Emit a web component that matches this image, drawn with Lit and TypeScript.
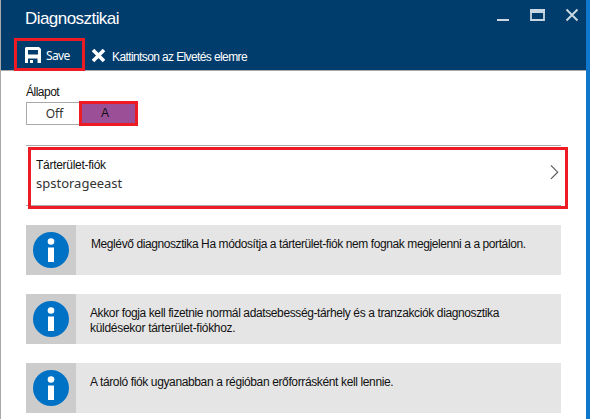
import { LitElement, html, css } from "lit";
import { customElement } from "lit/decorators.js";

@customElement("info-note")
class InfoNote extends LitElement {
  static styles = css`
    :host { display: flex; height: 50px; background: #e5e5e5; color: #111; font: 12px/15px "Liberation Sans", Arial, sans-serif; }
    .badge { flex: none; width: 50px; height: 50px; background: #ccc; }
    .badge svg { display: block; }
    .text { padding: 12px 0 0 14px; white-space: nowrap; }
  `;
  render() {
    return html`<div class="badge">
        <svg width="50" height="50" viewBox="0 0 50 50">
          <circle cx="25" cy="25" r="18" fill="#0072c6" />
          <circle cx="25" cy="16.5" r="3.3" fill="#fff" />
          <rect x="22" y="22.5" width="6" height="14.5" fill="#fff" />
        </svg>
      </div>
      <div class="text"><slot></slot></div>`;
  }
}

@customElement("app-root")
class AppRoot extends LitElement {
  static styles = css`
    :host { display: block; height: 419px; font-family: "Liberation Sans", Arial, sans-serif; font-size: 12px; color: #111; }
    * { box-sizing: border-box; }
    .blade { height: 419px; overflow: hidden; background: #fff; border-left: 1px solid #a9a9a9; border-right: 4px solid #1078cc; white-space: nowrap; }
    header { height: 71px; margin-left: -1px; background: #003c6c; border-bottom: 1px solid #aaa; border-left: 1px solid #1c5078; color: #fff; }
    .top { display: flex; height: 38px; justify-content: space-between; padding-left: 24px; }
    .title { font-size: 17px; line-height: 20px; padding-top: 9px; letter-spacing: -0.55px; }
    .win { flex: none; display: block; }
    .bar { display: flex; height: 33px; padding-left: 13px; }
    .save { display: flex; width: 71px; height: 33px; border: 3px solid #ed1c24; padding: 6px 0 0 8px; }
    .save span { font: 12px/16px "Noto Sans", "Open Sans", sans-serif; letter-spacing: -0.6px; margin: 1px 0 0 5px; }
    .discard { display: flex; padding: 10px 0 0 6px; }
    .discard span { line-height: 16px; margin: 1px 0 0 6px; letter-spacing: -0.61px; }
    svg { flex: none; display: block; }
    main { padding: 14px 25px 0 25px; }
    .label { line-height: 14px; height: 16px; letter-spacing: -0.5px; }
    .toggle { display: flex; align-items: center; height: 25px; }
    .off { width: 53px; height: 23px; border: 1px solid #aaa; border-right: 0; text-align: center; padding-left: 3px; color: #333; font: 12px/21px "Noto Sans", sans-serif; }
    .on { width: 59px; height: 25px; border: 3px solid #ed1c24; background: #9b4f96; padding-left: 19px; line-height: 18px; }
    .picker { height: 61px; margin-top: 19px; border: solid #aaa; border-width: 1px 0; }
    .mark { position: relative; width: 540px; height: 62px; margin: 1px 0 0 2px; border: 3px solid #ed1c24; display: flex; justify-content: space-between; padding: 8px 6px 0 5px; }
    .chevron { margin-top: 7px; }
    .name { line-height: 14px; letter-spacing: -0.28px; }
    .value { font: 13px/18px "Noto Sans", sans-serif; color: #333; margin-top: 2px; }
    .notes { display: flex; flex-direction: column; gap: 19px; margin-top: 19px; }
    .n1 { letter-spacing: -0.41px; text-indent: 1px; }
    .n2 { letter-spacing: -0.385px; }
    .n2 span { letter-spacing: -0.29px; }
    .n3 { letter-spacing: -0.37px; }
  `;
  render() {
    return html`<div class="blade">
      <header>
        <div class="top">
          <div class="title">Diagnosztikai</div>
          <svg class="win" width="96" height="30" viewBox="490 0 96 30" stroke="#c8d7e2" fill="none">
            <path d="M497 20h12" stroke-width="2" />
            <path d="M531 9.5v10.5h13v-10.5" stroke-width="1.8" />
            <path d="M530 11h15" stroke-width="4" />
            <path d="M566.5 9.5l11 11M577.5 9.5l-11 11" stroke-width="2" />
          </svg>
        </div>
        <div class="bar">
          <div class="save">
            <svg width="16" height="17" viewBox="0 0 16 17">
              <path fill="#fff" fill-rule="evenodd" d="M0 1l1-1h13l2 2v14H0zM3 3v4.500h10V3zM3 11.500V16h2v-3h3v3h4.500v-4.500z" />
            </svg>
            <span>Save</span>
          </div>
          <div class="discard">
            <svg width="15" height="15" viewBox="0 0 15 15"><path d="M2 2l11 11M13 2L2 13" stroke="#fff" stroke-width="3.6" /></svg>
            <span>Kattintson az Elvetés elemre</span>
          </div>
        </div>
      </header>
      <main>
        <div class="label">Állapot</div>
        <div class="toggle"><div class="off">Off</div><div class="on">A</div></div>
        <div class="picker">
          <div class="mark">
            <div><div class="name">Tárterület-fiók</div><div class="value">spstorageeast</div></div>
            <svg class="chevron" width="9" height="16" viewBox="0 0 9 16"><path d="M1 1l7 7-7 7" transform="translate(0 -.5) scale(.96)" fill="none" stroke="#555" stroke-width="1.2" /></svg>
          </div>
        </div>
        <div class="notes">
          <info-note class="n1">Meglévő diagnosztika Ha módosítja a tárterület-fiók nem fognak megjelenni a a portálon.</info-note>
          <info-note class="n2">Akkor fogja kell fizetnie normál adatsebesség-tárhely és a tranzakciók diagnosztika<br /><span>küldésekor tárterület-fiókhoz.</span></info-note>
          <info-note class="n3">A tároló fiók ugyanabban a régióban erőforrásként kell lennie.</info-note>
        </div>
      </main>
    </div>`;
  }
}
